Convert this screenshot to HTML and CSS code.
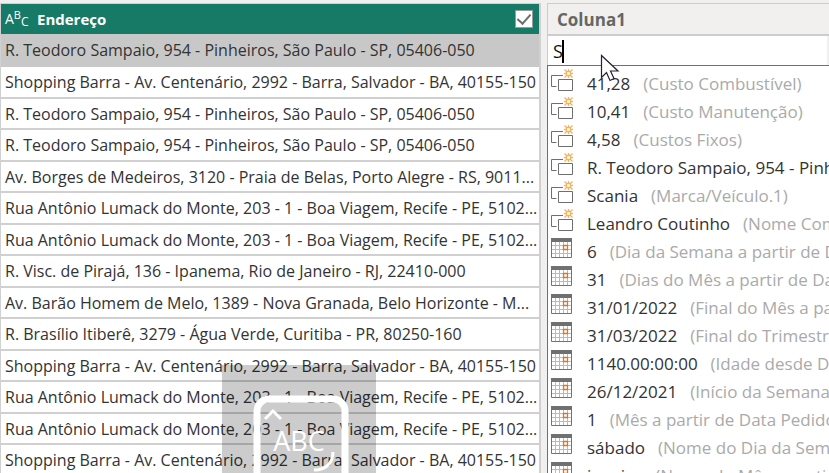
FILE: index.html
```html
<!DOCTYPE html>
<html lang="pt-BR">
<head>
<meta charset="utf-8">
<title>Coluna de exemplos</title>
<link rel="stylesheet" href="styles.css">
</head>
<body>
<svg class="defs" aria-hidden="true">
  <symbol id="column" viewBox="0 0 24 24">
    <path d="M12 5.500H0.500V16.500H5.500" fill="none" stroke="#6e6e6e"/>
    <path d="M7.500 9.500H21.500V20.500H7.500Z" fill="#fff" stroke="#6e6e6e"/>
    <path d="M15.500 1.500H19.500V5.500H15.500ZM15.500 1.500L13.500 -0.500M19.500 1.500L21.500 -0.500M15.500 5.500L13.500 7.500M19.500 5.500L21.500 7.500M17.500 1.500V-1M17.500 5.500V8M15.500 3.500H13M19.500 3.500H22" fill="none" stroke="#edb662" stroke-width="1.300"/>
  </symbol>
  <symbol id="calendar" viewBox="0 0 24 24">
    <path d="M0.500 0.500H20.500V19.500H0.500Z" fill="#fff" stroke="#737373"/>
    <path d="M1 7.500H20M1 11.500H20M1 15.500H20M4.500 4V19M8.500 4V19M12.500 4V19M16.500 4V19" fill="none" stroke="#bababa"/>
    <path d="M0 0H21V4H0Z" fill="#707070"/>
    <path d="M12.500 7.500H16.500V11.500H12.500Z" fill="#fff" stroke="#df7420" stroke-width="1.300"/>
  </symbol>
</svg>
<main class="workspace">
  <section class="source">
    <table class="grid">
      <thead>
        <tr><th scope="col">
          <div class="head">
            <span class="type"><span>A</span><span class="raised">B</span><span class="lowered">C</span></span>
            <label for="use-column">Endereço</label>
            <input class="check" id="use-column" type="checkbox" checked>
          </div>
        </th></tr>
      </thead>
      <tbody>
        <tr class="selected"><td>R. Teodoro Sampaio, 954 - Pinheiros, São Paulo - SP, 05406-050</td></tr>
        <tr><td>Shopping Barra - Av. Centenário, 2992 - Barra, Salvador - BA, 40155-150</td></tr>
        <tr><td>R. Teodoro Sampaio, 954 - Pinheiros, São Paulo - SP, 05406-050</td></tr>
        <tr><td>R. Teodoro Sampaio, 954 - Pinheiros, São Paulo - SP, 05406-050</td></tr>
        <tr><td>Av. Borges de Medeiros, 3120 - Praia de Belas, Porto Alegre - RS, 9011...</td></tr>
        <tr><td>Rua Antônio Lumack do Monte, 203 - 1 - Boa Viagem, Recife - PE, 5102...</td></tr>
        <tr><td>Rua Antônio Lumack do Monte, 203 - 1 - Boa Viagem, Recife - PE, 5102...</td></tr>
        <tr><td>R. Visc. de Pirajá, 136 - Ipanema, Rio de Janeiro - RJ, 22410-000</td></tr>
        <tr><td>Av. Barão Homem de Melo, 1389 - Nova Granada, Belo Horizonte - M...</td></tr>
        <tr><td>R. Brasílio Itiberê, 3279 - Água Verde, Curitiba - PR, 80250-160</td></tr>
        <tr><td>Shopping Barra - Av. Centenário, 2992 - Barra, Salvador - BA, 40155-150</td></tr>
        <tr><td>Rua Antônio Lumack do Monte, 203 - 1 - Boa Viagem, Recife - PE, 5102...</td></tr>
        <tr><td>Rua Antônio Lumack do Monte, 203 - 1 - Boa Viagem, Recife - PE, 5102...</td></tr>
        <tr><td>Shopping Barra - Av. Centenário, 2992 - Barra, Salvador - BA, 40155-150</td></tr>
      </tbody>
    </table>
  </section>
  <section class="example">
    <label class="title" for="value">Coluna1</label>
    <div class="editor"><input id="value" type="text" value="S"><span class="caret"></span></div>
    <ul class="options">
      <li><svg><use href="#column"/></svg><span>41,28</span><i>(Custo Combustível)</i></li>
      <li><svg><use href="#column"/></svg><span>10,41</span><i>(Custo Manutenção)</i></li>
      <li><svg><use href="#column"/></svg><span>4,58</span><i>(Custos Fixos)</i></li>
      <li><svg><use href="#column"/></svg><span>R. Teodoro Sampaio, 954 - Pinheiros</span></li>
      <li><svg><use href="#column"/></svg><span>Scania</span><i>(Marca/Veículo.1)</i></li>
      <li><svg><use href="#column"/></svg><span>Leandro Coutinho</span><i>(Nome Completo)</i></li>
      <li><svg><use href="#calendar"/></svg><span>6</span><i>(Dia da Semana a partir de Data)</i></li>
      <li><svg><use href="#calendar"/></svg><span>31</span><i>(Dias do Mês a partir de Data)</i></li>
      <li><svg><use href="#calendar"/></svg><span>31/01/2022</span><i>(Final do Mês a partir)</i></li>
      <li><svg><use href="#calendar"/></svg><span>31/03/2022</span><i>(Final do Trimestre)</i></li>
      <li><svg><use href="#calendar"/></svg><span>1140.00:00:00</span><i>(Idade desde Data)</i></li>
      <li><svg><use href="#calendar"/></svg><span>26/12/2021</span><i>(Início da Semana)</i></li>
      <li><svg><use href="#calendar"/></svg><span>1</span><i>(Mês a partir de Data Pedido)</i></li>
      <li><svg><use href="#calendar"/></svg><span>sábado</span><i>(Nome do Dia da Semana)</i></li>
      <li><svg><use href="#calendar"/></svg><span>janeiro</span><i>(Nome do Mês a partir)</i></li>
    </ul>
  </section>
</main>
<div class="keycap">
  <svg viewBox="0 0 154 154" aria-hidden="true">
    <rect x="35" y="34" width="88" height="88" rx="12" fill="none" stroke="#fff" stroke-width="7"/>
    <path d="M43 54L51 46L59 54" fill="none" stroke="#fff" stroke-width="3"/>
    <path d="M111 87C111 98 104 105 92 105" fill="none" stroke="#fff" stroke-width="3"/>
  </svg>
  <span>ABC</span>
</div>
<svg class="pointer" viewBox="0 0 20 28" aria-hidden="true"><path d="M1.500 1.500V23.500L6.500 18.500L10 26.500L14 24.500L10.500 17H18Z" fill="#fff" stroke="#222233" stroke-width="1.200"/></svg>
</body>
</html>
```
FILE: styles.css
```css
* { box-sizing: border-box; }
body {
  margin: 0;
  height: 100vh;
  overflow: hidden;
  position: relative;
  background: #f1f0ef;
  color: #333;
  font-family: "Open Sans", "Noto Sans", sans-serif;
}
.defs { position: absolute; width: 0; height: 0; }
.workspace {
  display: grid;
  grid-template-columns: 541fr 282fr;
  gap: 6px;
  height: 100%;
  padding-top: 3px;
  overflow: hidden;
}
.source { min-width: 0; overflow: hidden; border: solid #d0d0d0; border-width: 1px 2px 0 1px; }
.grid { width: 100%; table-layout: fixed; border-collapse: collapse; }
.grid th { padding: 0; background: #177a67; }
.head {
  display: flex;
  align-items: center;
  gap: 8px;
  height: 30px;
  padding: 0 6px 0 4px;
  color: #fff;
  font-size: 15px;
}
.head label { flex: 1; text-align: left; }
.type {
  display: flex;
  width: 24px;
  font-size: 14px;
  font-weight: 400;
  line-height: 20px;
}
.type .raised { padding-bottom: 8px; font-size: 11px; line-height: 12px; }
.type .lowered { padding-top: 6px; font-size: 12px; line-height: 14px; }
.check {
  appearance: none;
  margin: 0;
  width: 18px;
  height: 18px;
  border: 1px solid #9b9b9b;
  background: #fff;
  display: grid;
  place-items: center;
}
.check::after {
  content: "";
  width: 6px;
  height: 11px;
  margin-bottom: 3px;
  border: solid #6c6c6c;
  border-width: 0 2px 2px 0;
  transform: rotate(42deg);
}
.grid td {
  height: 31px;
  padding: 0 4px;
  background: #fff;
  border-bottom: 2px solid #d0d0d0;
  font-size: 16px;
  line-height: 20px;
  white-space: nowrap;
  overflow: hidden;
}
.grid tr:nth-child(even) td { height: 32px; }
.grid .selected td { height: 32px; background: #c8c8c8; border-bottom-color: #c8c8c8; }
.example { min-width: 0; min-height: 0; display: flex; flex-direction: column; }
.title {
  flex: none;
  height: 33px;
  padding-left: 9px;
  border: 1px solid #ccc;
  border-right: 0;
  border-bottom-width: 2px;
  color: #666;
  font-size: 17px;
  font-weight: 700;
  line-height: 31px;
}
.editor {
  flex: none;
  position: relative;
  height: 29px;
  margin-right: 2px;
  border-left: 1px solid #ccc;
}
.editor input {
  display: block;
  width: 100%;
  height: 100%;
  padding: 0 5px;
  border: 0;
  outline: 0;
  background: #fff;
  color: #111;
  font: 18px "Open Sans", sans-serif;
}
.caret { position: absolute; left: 14px; top: 4px; width: 2px; height: 23px; background: #000; }
.options {
  flex: 1;
  min-height: 0;
  margin: 0;
  padding: 4px 0 0 3px;
  list-style: none;
  overflow: hidden;
  background: #fff;
  border: solid #707070;
  border-width: 1px 0 0 1px;
  font-size: 17px;
  line-height: 27px;
  white-space: nowrap;
}
.options li { display: flex; height: 28px; }
.options svg { flex: none; width: 24px; height: 24px; margin-right: 12px; overflow: visible; }
#column { overflow: visible; }
.options i { margin-left: 13px; color: #aaa; font-style: normal; }
.keycap {
  position: absolute;
  left: 222px;
  top: 365px;
  bottom: 0;
  width: 154px;
  overflow: hidden;
  background: rgb(0 0 0 / 20%);
  color: #fff;
}
.keycap svg { display: block; width: 154px; height: 154px; }
.keycap span { position: absolute; inset: 61px 0 auto; text-align: center; font-size: 27px; line-height: 30px; }
.pointer { position: absolute; left: 600px; top: 54px; width: 20px; height: 28px; }
```
